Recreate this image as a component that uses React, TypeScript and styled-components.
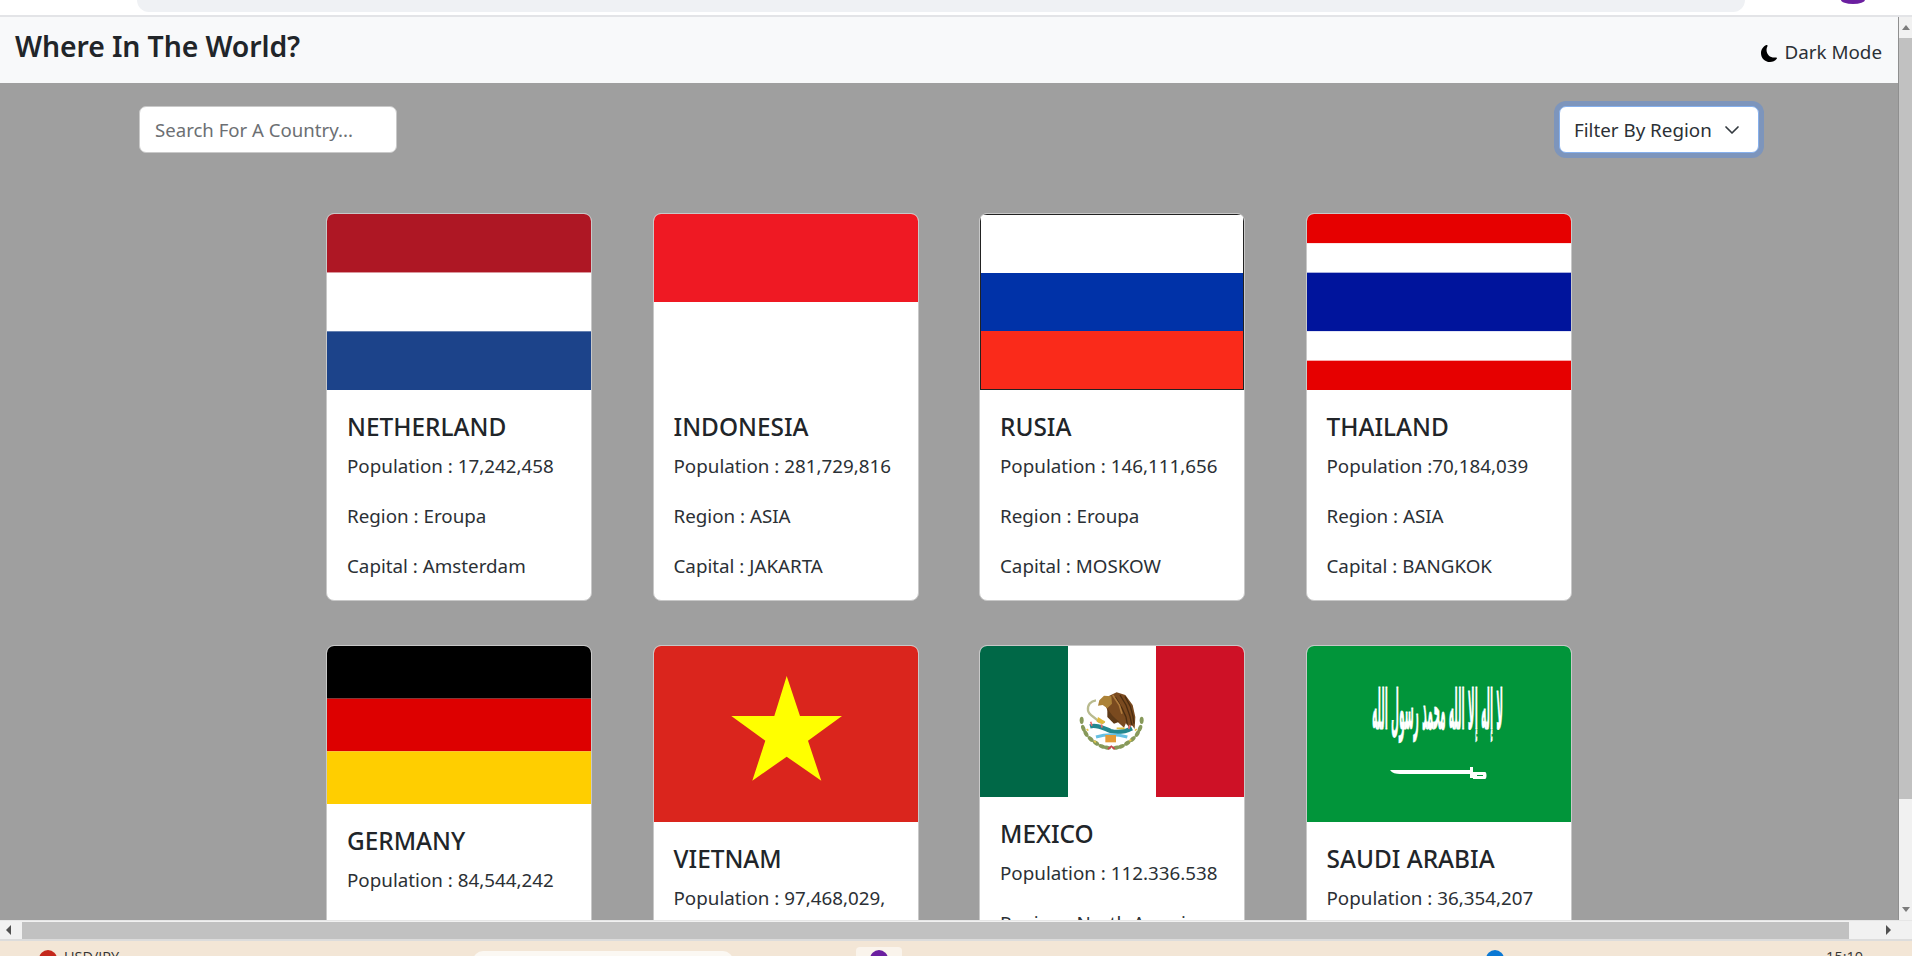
import React from "react";
import styled, { createGlobalStyle } from "styled-components";
import { BsMoonFill } from "react-icons/bs";

const Global = createGlobalStyle`
  html, body { margin: 0; padding: 0; height: 100%; overflow: hidden; }
  body { font-family: "Noto Sans", "Open Sans", sans-serif; color: #212529; }
  #root { height: 100%; }
  * { box-sizing: border-box; }
`;

const Shell = styled.div`
  display: flex;
  flex-direction: column;
  height: 956px;
  width: 1912px;
  overflow: hidden;
`;

const ChromeStrip = styled.div`
  display: flex;
  align-items: flex-start;
  flex: none;
  height: 17px;
  padding-left: 137px;
  background: #fff;
  border-bottom: 2px solid #e3e4e7;
`;

const UrlPill = styled.div`
  width: 1608px;
  height: 12px;
  background: #eff1f4;
  border-radius: 0 0 18px 18px;
`;

const Avatar = styled.div`
  width: 24px;
  height: 4px;
  margin-left: 96px;
  background: #6b1fa0;
  border-radius: 0 0 50% 50% / 0 0 100% 100%;
`;

const Viewport = styled.div`
  display: flex;
  flex: none;
  height: 903px;
`;

const Page = styled.main`
  width: 1898px;
  flex: none;
  background: #9f9f9f;
  overflow: hidden;
`;

const Navbar = styled.header`
  display: flex;
  align-items: center;
  justify-content: space-between;
  height: 66px;
  padding: 0 16px 0 15px;
  background: #f8f9fa;
`;

const Brand = styled.h1`
  margin: -8px 0 0;
  font-size: 28.4px;
  line-height: 36px;
  font-weight: 600;
  letter-spacing: -0.1px;
  color: #212529;
`;

const ModeToggle = styled.div`
  display: flex;
  align-items: center;
  gap: 7px;
  margin-top: 3px;
  font-size: 18.8px;
  line-height: 28px;
  color: #2b3035;
  svg { width: 17px; height: 17px; color: #000; margin-top: 3px; }
`;

const Toolbar = styled.div`
  display: flex;
  align-items: center;
  justify-content: space-between;
  padding: 23px 139px 0 139px;
`;

const SearchInput = styled.input`
  width: 258px;
  height: 47px;
  padding: 0 15px;
  background: #fff;
  border: 1px solid #c9c9c9;
  border-radius: 7px;
  font-family: inherit;
  font-size: 18.6px;
  color: #212529;
  outline: none;
  &::placeholder { color: #6c6f73; opacity: 1; }
`;

const FilterButton = styled.button`
  display: flex;
  align-items: center;
  justify-content: space-between;
  width: 200px;
  height: 47px;
  padding: 0 18px 0 14px;
  background: #fff;
  border: 1px solid #86b0ec;
  border-radius: 7px;
  box-shadow: 0 0 0 5px #7d95bc;
  font-family: inherit;
  font-size: 18.8px;
  color: #2b3035;
  svg { width: 16px; height: 16px; flex: none; }
`;

const CardGrid = styled.section`
  display: grid;
  grid-template-columns: repeat(4, 266px);
  column-gap: 60.5px;
  row-gap: 44px;
  justify-content: start;
  margin: 60px 0 0 326px;
`;

const Card = styled.article`
  display: flex;
  flex-direction: column;
  background: #fff;
  border: 1px solid #c8c8c8;
  border-radius: 8px;
  overflow: hidden;
`;

const FlagFrame = styled.div<{ $height: number }>`
  flex: none;
  height: ${(p) => p.$height}px;
  svg { display: block; width: 100%; height: 100%; }
`;

const CardBody = styled.div`
  padding: 21px 20px 19px 20px;
`;

const CardTitle = styled.h5`
  margin: 0 0 8px;
  font-size: 24.4px;
  line-height: 32px;
  font-weight: 500;
  color: #212529;
`;

const CardLine = styled.p`
  margin: 0 0 20px;
  font-size: 18.8px;
  line-height: 30px;
  white-space: nowrap;
  color: #2b3035;
  &:last-child { margin-bottom: 0; }
`;

const VScroll = styled.div`
  display: flex;
  flex-direction: column;
  flex: none;
  width: 14px;
  background: #f1f1f1;
  border-left: 1px solid #8f8f8f;
`;

const VArrow = styled.div<{ $down?: boolean }>`
  flex: none;
  height: 21px;
  display: flex;
  align-items: center;
  justify-content: center;
  margin-top: ${(p) => (p.$down ? "auto" : "0")};
  &::before {
    content: "";
    border-left: 4px solid transparent;
    border-right: 4px solid transparent;
    ${(p) => (p.$down ? "border-top" : "border-bottom")}: 5px solid #7c7c7c;
  }
`;

const VThumb = styled.div`
  flex: none;
  height: 761px;
  background: #c1c1c1;
`;

const HScroll = styled.div`
  display: flex;
  align-items: center;
  flex: none;
  height: 21px;
  background: #f1f1f1;
  border-top: 1px solid #e6e6e6;
  border-bottom: 2px solid #dcdcdc;
`;

const HArrow = styled.div<{ $right?: boolean }>`
  flex: none;
  width: ${(p) => (p.$right ? "63px" : "22px")};
  height: 100%;
  display: flex;
  align-items: center;
  padding-left: ${(p) => (p.$right ? "37px" : "6px")};
  &::before {
    content: "";
    border-top: 5px solid transparent;
    border-bottom: 5px solid transparent;
    ${(p) => (p.$right ? "border-left" : "border-right")}: 5px solid #505050;
  }
`;

const HThumb = styled.div`
  flex: none;
  width: 1827px;
  height: 17px;
  background: #c1c1c1;
`;

const Taskbar = styled.footer`
  display: flex;
  align-items: flex-start;
  flex: none;
  height: 15px;
  background: #f3e6d6;
  overflow: hidden;
`;

const TaskDot = styled.div<{ $color: string; $left: number; $top: number }>`
  flex: none;
  width: 18px;
  height: 18px;
  margin: ${(p) => p.$top}px 0 0 ${(p) => p.$left}px;
  border-radius: 50%;
  background: ${(p) => p.$color};
`;

const TaskText = styled.span<{ $left: number }>`
  flex: none;
  margin: 8px 0 0 ${(p) => p.$left}px;
  font-family: "Open Sans", sans-serif;
  font-size: 14.5px;
  line-height: 16px;
  color: #333;
`;

const TaskSearch = styled.div`
  flex: none;
  width: 260px;
  height: 20px;
  margin: 10px 0 0 354px;
  border-radius: 10px 10px 0 0;
  background: #fbf8f3;
`;

const TaskTile = styled.div`
  flex: none;
  display: flex;
  justify-content: center;
  width: 46px;
  height: 20px;
  margin: 6px 0 0 123px;
  padding-top: 3px;
  border-radius: 4px 4px 0 0;
  background: #faf4ec;
`;

const TaskTileDot = styled.div`
  width: 18px;
  height: 18px;
  border-radius: 50%;
  background: #6b1fa0;
`;

const Stripes = ({ colors }: { colors: [string, number][] }) => {
  const total = colors.reduce((s, c) => s + c[1], 0);
  let y = 0;
  return (
    <svg viewBox={`0 0 264 ${total}`} preserveAspectRatio="none">
      {colors.map(([c, h], i) => {
        const r = <rect key={i} x="0" y={y} width="264" height={h} fill={c} />;
        y += h;
        return r;
      })}
    </svg>
  );
};

const Russia = () => (
  <svg viewBox="0 0 264 176" preserveAspectRatio="none">
    <rect width="264" height="59" fill="#fff" />
    <rect y="59" width="264" height="58" fill="#0032a8" />
    <rect y="117" width="264" height="59" fill="#fa2a1a" />
    <rect x="0.5" y="0.5" width="263" height="175" fill="none" stroke="#222" strokeWidth="1" />
  </svg>
);

const Vietnam = () => (
  <svg viewBox="0 0 264 176">
    <rect width="264" height="176" fill="#da251d" />
    <polygon
      fill="#ffff00"
      points="132.7,30 146,70 188,70 154,94.7 167.3,134.7 132.7,110.7 98.3,134.7 111.3,94.7 77.3,70 120.3,70"
    />
  </svg>
);

const leftLeaves: [number, number, number][] = [
  [35, 106, 0], [40, 130, -20], [48, 146, -30], [62, 162, -45], [78, 174, -55], [96, 184, -70], [112, 188, -80],
];

const Mexico = () => (
  <svg viewBox="0 0 264 151">
    <rect width="88" height="151" fill="#006847" />
    <rect x="88" width="88" height="151" fill="#fff" />
    <rect x="176" width="88" height="151" fill="#ce1126" />
    <g transform="translate(90 39) scale(0.3333)">
      {leftLeaves.map(([x, y, a]) => (
        <g key={x}>
          <ellipse cx={x} cy={y} rx="6" ry="11" fill="#87995a" transform={`rotate(${a} ${x} ${y})`} />
          <ellipse cx={250 - x} cy={y} rx="6" ry="11" fill="#87995a" transform={`rotate(${-a} ${250 - x} ${y})`} />
        </g>
      ))}
      <path d="M50 132l5 5M72 168l6 4M178 168l6-4M200 132l-5 5" stroke="#e8c84a" strokeWidth="5" />
      <path d="M118 32l22-10 26 8 22 30 8 36 -2 36-10-14-4 14-12-18-6 14-22-20-18-12-14-30z" fill="#7a4a1f" />
      <path d="M150 30l18 30 12 34 6 28M165 34l16 30 8 30 3 22M136 36l20 34 12 26 4 22" fill="none" stroke="#4a2c10" strokeWidth="4" />
      <path d="M128 30l20 30 8 26" fill="none" stroke="#b07c3e" strokeWidth="5" />
      <path d="M112 70c12 20 20 28 36 40l-16 6-20-20z" fill="#5e3a18" />
      <path d="M88 46l14-14 22 2 2 22-14 14-14-10-14 2z" fill="#ac8238" />
      <path d="M78 46c-16 2-26 14-24 30 2 14 20 20 26 28 6 8 16 10 24 6" fill="none" stroke="#b9bb8f" strokeWidth="7" />
      <path d="M84 96l22 14-8 8-18-8z" fill="#e0b93a" />
      <path d="M60 124c22-6 40 6 62 14 22 6 44 2 64-8" fill="none" stroke="#23888f" strokeWidth="13" />
      <path d="M78 156c28-8 64-8 94 0" fill="none" stroke="#67c0e2" strokeWidth="9" />
      <rect x="106" y="150" width="32" height="22" fill="#e49a36" />
      <path d="M140 130h24" stroke="#e0c040" strokeWidth="5" />
      <path d="M62 110l4 12M94 118l2 10M180 120l-4 12" stroke="#e56a6a" strokeWidth="5" />
      <path d="M114 192l10-8 10 8" fill="none" stroke="#c8444c" strokeWidth="5" />
    </g>
  </svg>
);

const ShahadaText = styled.text`
  font-family: "DejaVu Sans", sans-serif;
  font-weight: 700;
  font-size: 22px;
  fill: #fff;
  stroke: #fff;
  stroke-width: 0.3px;
`;

const SaudiArabia = () => (
  <svg viewBox="0 0 264 176">
    <rect width="264" height="176" fill="#01953a" />
    <g transform="translate(0 83) scale(1 2.5)">
      <ShahadaText x="130.5" y="0" direction="rtl" textAnchor="middle" textLength={131} lengthAdjust="spacingAndGlyphs">
        لا إله إلا الله محمد رسول الله
      </ShahadaText>
    </g>
    <path d="M83 124H163V121h3v5h12c2 0 2 7 0 7h-12v-1h-3v-4H93c-4 0-8-1-10-4z" fill="#fff" />
    <rect x="170" y="129" width="6" height="1" fill="#01953a" />
  </svg>
);

type Country = {
  name: string;
  population: string;
  region: string;
  capital: string;
  flagHeight: number;
  flag: React.ReactNode;
};

const countries: Country[] = [
  { name: "NETHERLAND", population: "Population : 17,242,458", region: "Region : Eroupa", capital: "Capital : Amsterdam", flagHeight: 176, flag: <Stripes colors={[["#ae1724", 1], ["#ffffff", 1], ["#1c438a", 1]]} /> },
  { name: "INDONESIA", population: "Population : 281,729,816", region: "Region : ASIA", capital: "Capital : JAKARTA", flagHeight: 176, flag: <Stripes colors={[["#ef1923", 1], ["#ffffff", 1]]} /> },
  { name: "RUSIA", population: "Population : 146,111,656", region: "Region : Eroupa", capital: "Capital : MOSKOW", flagHeight: 176, flag: <Russia /> },
  { name: "THAILAND", population: "Population :70,184,039", region: "Region : ASIA", capital: "Capital : BANGKOK", flagHeight: 176, flag: <Stripes colors={[["#e60000", 1], ["#ffffff", 1], ["#00149c", 2], ["#ffffff", 1], ["#e60000", 1]]} /> },
  { name: "GERMANY", population: "Population : 84,544,242", region: "Region : Eroupa", capital: "Capital : BERLIN", flagHeight: 158, flag: <Stripes colors={[["#000000", 1], ["#dd0000", 1], ["#ffce00", 1]]} /> },
  { name: "VIETNAM", population: "Population : 97,468,029,", region: "Region : ASIA", capital: "Capital : HANOI", flagHeight: 176, flag: <Vietnam /> },
  { name: "MEXICO", population: "Population : 112.336.538", region: "Region : North America", capital: "Capital : MEXICO CITY", flagHeight: 151, flag: <Mexico /> },
  { name: "SAUDI ARABIA", population: "Population : 36,354,207", region: "Region : ASIA", capital: "Capital : RIYADH", flagHeight: 176, flag: <SaudiArabia /> },
];

export default function App() {
  return (
    <Shell>
      <Global />
      <ChromeStrip>
        <UrlPill />
        <Avatar />
      </ChromeStrip>
      <Viewport>
        <Page>
          <Navbar>
            <Brand>Where In The World?</Brand>
            <ModeToggle>
              <BsMoonFill />
              Dark Mode
            </ModeToggle>
          </Navbar>
          <Toolbar>
            <SearchInput placeholder="Search For A Country..." />
            <FilterButton type="button">
              Filter By Region
              <svg viewBox="0 0 16 16" fill="none" stroke="#343a40" strokeWidth="1.7" strokeLinecap="round" strokeLinejoin="round">
                <path d="m2 5 6 6 6-6" />
              </svg>
            </FilterButton>
          </Toolbar>
          <CardGrid>
            {countries.map((c) => (
              <Card key={c.name}>
                <FlagFrame $height={c.flagHeight}>{c.flag}</FlagFrame>
                <CardBody>
                  <CardTitle>{c.name}</CardTitle>
                  <CardLine>{c.population}</CardLine>
                  <CardLine>{c.region}</CardLine>
                  <CardLine>{c.capital}</CardLine>
                </CardBody>
              </Card>
            ))}
          </CardGrid>
        </Page>
        <VScroll>
          <VArrow />
          <VThumb />
          <VArrow $down />
        </VScroll>
      </Viewport>
      <HScroll>
        <HArrow />
        <HThumb />
        <HArrow $right />
      </HScroll>
      <Taskbar>
        <TaskDot $color="#c4281c" $left={39} $top={9} />
        <TaskText $left={7}>USD/JPY</TaskText>
        <TaskSearch />
        <TaskTile>
          <TaskTileDot />
        </TaskTile>
        <TaskDot $color="#0a78d4" $left={584} $top={9} />
        <TaskText $left={322}>15:10</TaskText>
      </Taskbar>
    </Shell>
  );
}
